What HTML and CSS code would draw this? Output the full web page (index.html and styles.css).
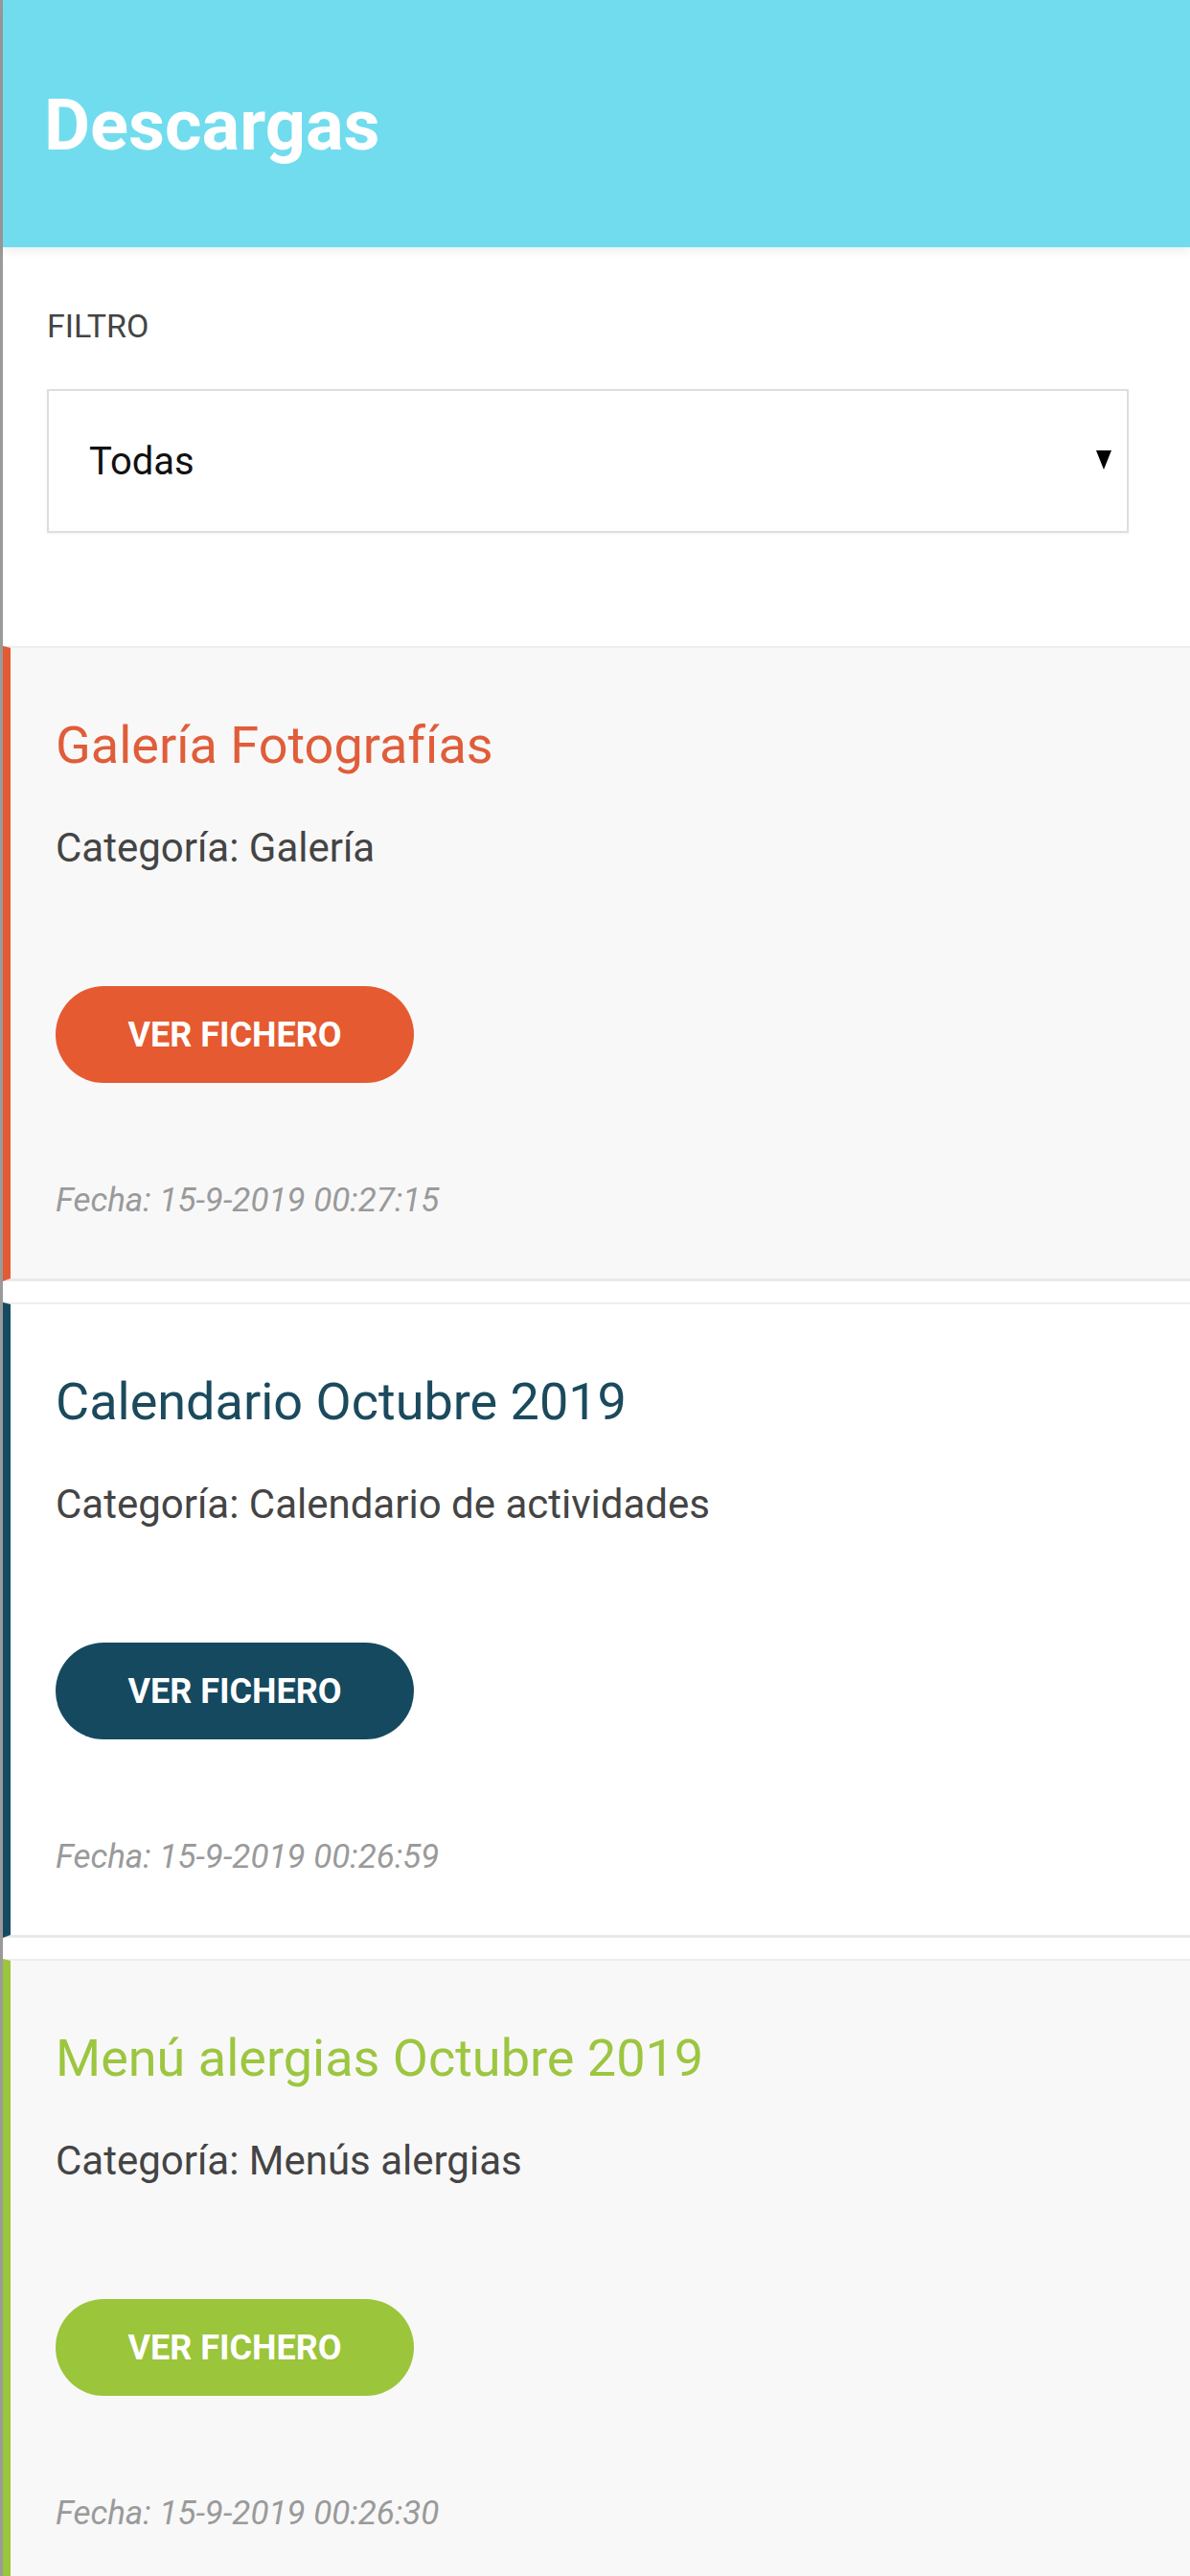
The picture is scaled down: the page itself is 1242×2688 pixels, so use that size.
FILE: index.html
```html
<!DOCTYPE html>
<html lang="es">
<head>
    <meta charset="UTF-8">
    <meta name="viewport" content="width=device-width, initial-scale=1.0">
    <title>Descargas</title>
    <link rel="stylesheet" href="styles.css">
</head>
<body>
    <div class="page">
        <header class="top-bar">
            <h1>Descargas</h1>
        </header>

        <section class="filter">
            <label class="filter-label" for="filtro">FILTRO</label>
            <div class="select-box">
                <span class="select-value" id="filtro">Todas</span>
                <svg class="select-arrow" viewBox="0 0 16 20" width="16" height="20">
                    <polygon points="0,0 16,0 8,20" fill="#000"/>
                </svg>
            </div>
        </section>

        <div class="downloads">
            <div class="card card-orange">
                <h2 class="card-title">Galería Fotografías</h2>
                <p class="card-category">Categoría: Galería</p>
                <a class="btn-file" href="#">VER FICHERO</a>
                <p class="card-date">Fecha: 15-9-2019 00:27:15</p>
            </div>
            <div class="card card-navy">
                <h2 class="card-title">Calendario Octubre 2019</h2>
                <p class="card-category">Categoría: Calendario de actividades</p>
                <a class="btn-file" href="#">VER FICHERO</a>
                <p class="card-date">Fecha: 15-9-2019 00:26:59</p>
            </div>
            <div class="card card-green">
                <h2 class="card-title">Menú alergias Octubre 2019</h2>
                <p class="card-category">Categoría: Menús alergias</p>
                <a class="btn-file" href="#">VER FICHERO</a>
                <p class="card-date">Fecha: 15-9-2019 00:26:30</p>
            </div>
        </div>
    </div>
</body>
</html>
```

FILE: styles.css
```css
body {
    margin: 0;
    font-family: Roboto, "Liberation Sans", Arial, sans-serif;
    background-color: #fff;
    color: #444;
}
.page {
    border-left: 3px solid #9a9a9a;
    min-height: 2688px;
}
.top-bar {
    height: 258px;
    background-color: #71dcee;
    display: flex;
    align-items: center;
    padding-left: 43px;
    box-shadow: 0 4px 10px rgba(0,0,0,0.07);
    position: relative;
}
.top-bar h1 {
    margin: 0;
    color: #fff;
    font-size: 74px;
    font-weight: 700;
    line-height: 1;
    padding-top: 4px;
}
.filter {
    padding: 62px 64px 118px 46px;
}
.filter-label {
    display: block;
    font-size: 34px;
    line-height: 40px;
    color: #444;
}
.select-box {
    margin-top: 46px;
    height: 146px;
    border: 2px solid #dedede;
    box-shadow: 0 1px 2px rgba(0,0,0,0.06);
    display: flex;
    align-items: center;
    justify-content: space-between;
    padding: 0 16px 0 42px;
}
.select-value {
    font-size: 40px;
    color: #111;
}
.select-arrow {
    display: block;
    margin-top: -2px;
}
.card {
    background-color: #f8f8f8;
    border-top: 2px solid #eeeeee;
    border-bottom: 3px solid #e9e9e9;
    border-left: 8px solid #e35b35;
    padding: 70px 40px 59px 47px;
    margin-bottom: 22px;
}
.card:nth-child(even) {
    background-color: #fff;
}
.card-title {
    margin: 0;
    font-size: 54px;
    font-weight: 400;
    line-height: 64px;
}
.card-category {
    margin: 49px 0 0;
    font-size: 42px;
    line-height: 52px;
    color: #444;
}
.btn-file {
    display: flex;
    align-items: center;
    justify-content: center;
    width: 374px;
    height: 101px;
    margin-top: 118px;
    border-radius: 51px;
    color: #fff;
    font-size: 36px;
    font-weight: 700;
    text-decoration: none;
}
.card-date {
    margin: 101px 0 0;
    font-size: 35px;
    line-height: 44px;
    font-style: italic;
    color: #9a9a9a;
}
.card-orange {
    border-left-color: #e35b35;
}
.card-orange .card-title {
    color: #e05d39;
}
.card-orange .btn-file {
    background-color: #e55a30;
}
.card-navy {
    border-left-color: #164a60;
}
.card-navy .card-title {
    color: #1b4a5d;
}
.card-navy .btn-file {
    background-color: #154960;
}
.card-green {
    border-left-color: #9bc53c;
}
.card-green .card-title {
    color: #9cc640;
}
.card-green .btn-file {
    background-color: #9bc53a;
}
```
